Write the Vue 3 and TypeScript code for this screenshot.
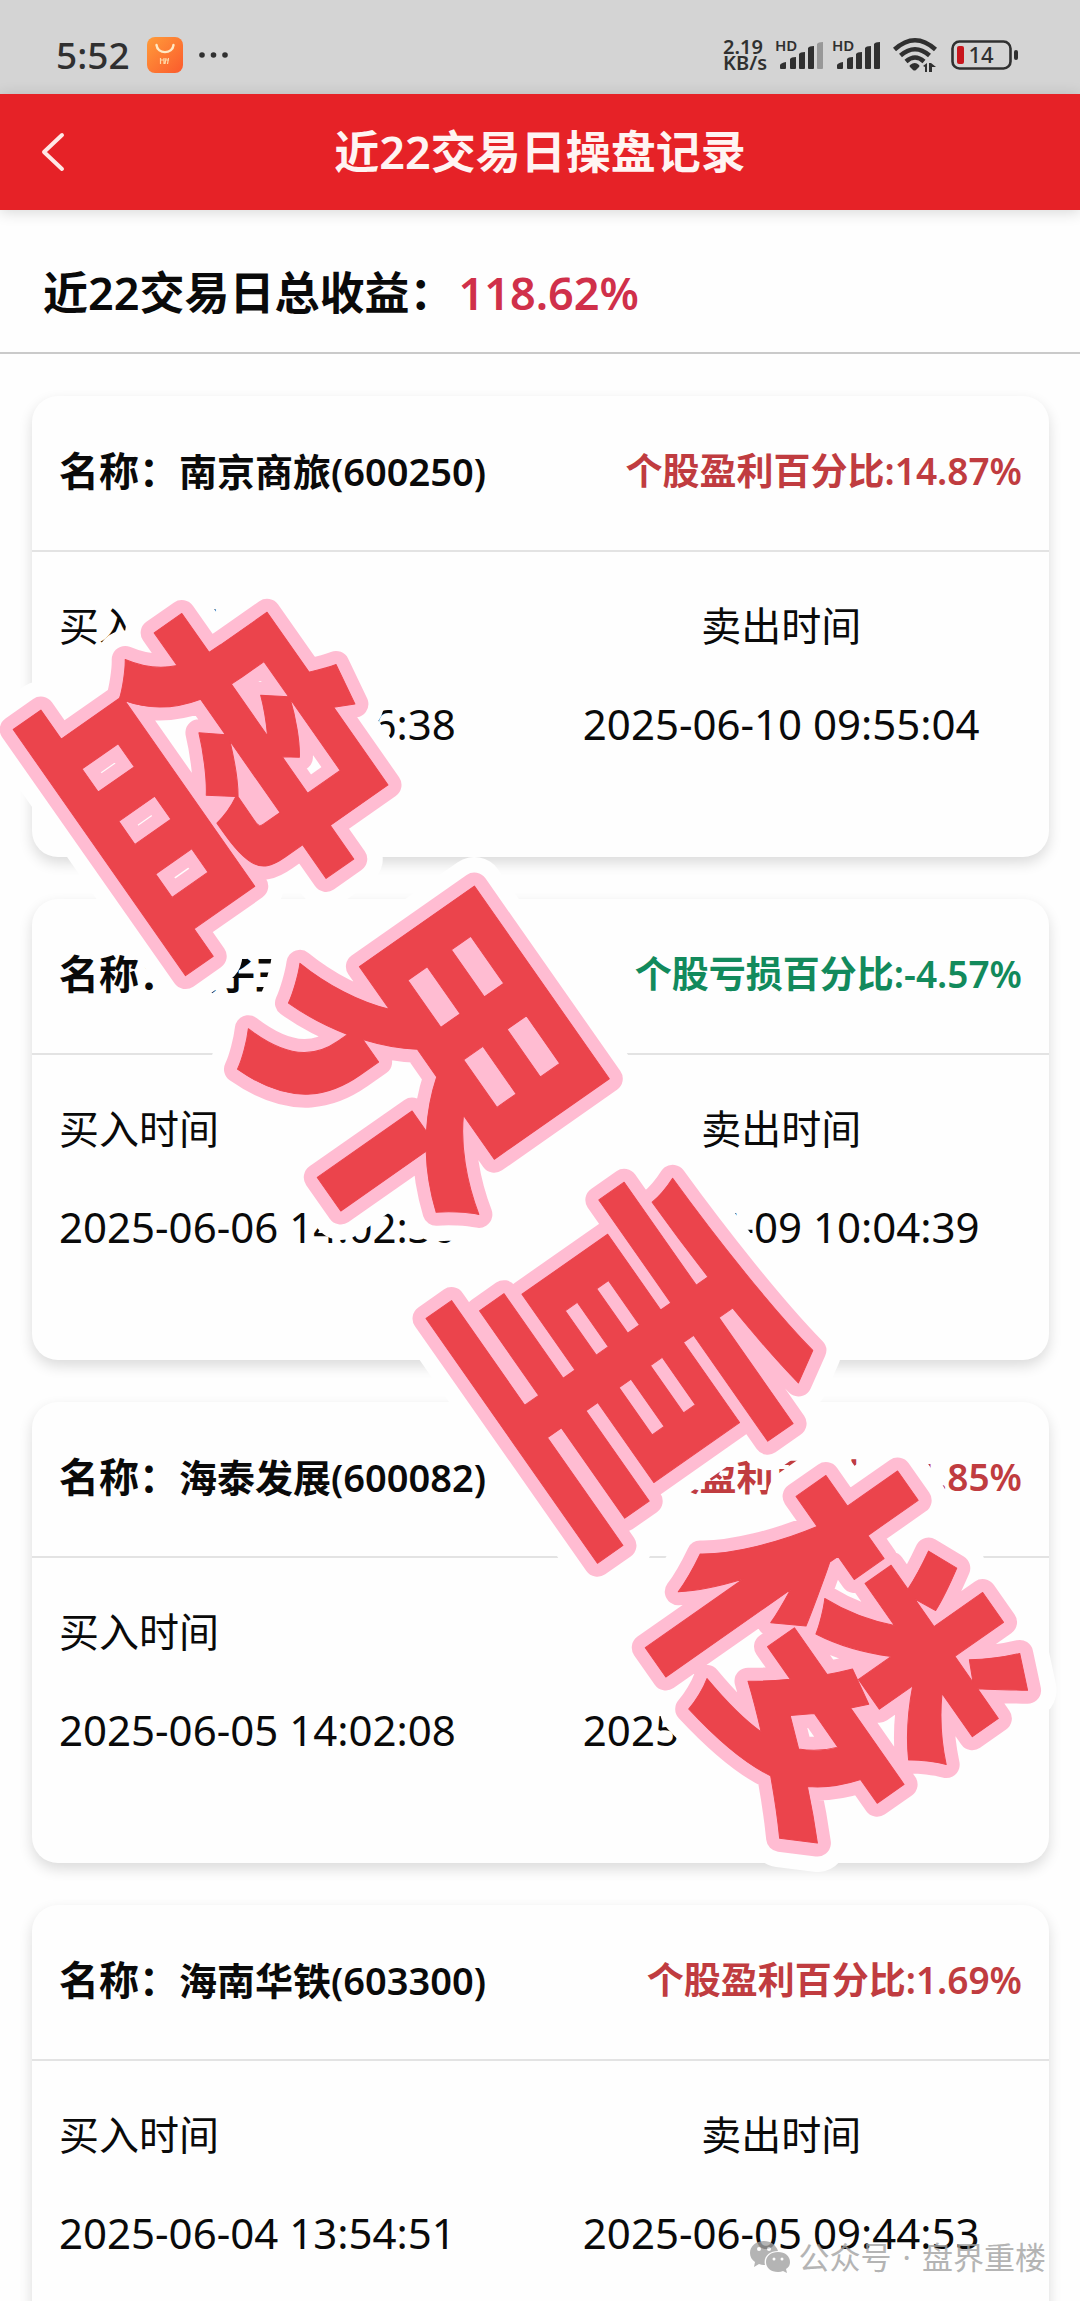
<script setup lang="ts">
interface Trade {
  name: string
  code: string
  profit: boolean
  percent: string
  buyTime: string
  sellTime: string
}

const total = '118.62%'

const trades: Trade[] = [
  { name: '南京商旅', code: '600250', profit: true, percent: '14.87%', buyTime: '2025-06-09 14:06:38', sellTime: '2025-06-10 09:55:04' },
  { name: '孩子王', code: '301078', profit: false, percent: '-4.57%', buyTime: '2025-06-06 14:02:36', sellTime: '2025-06-09 10:04:39' },
  { name: '海泰发展', code: '600082', profit: true, percent: '11.85%', buyTime: '2025-06-05 14:02:08', sellTime: '2025-06-06 09:46:20' },
  { name: '海南华铁', code: '603300', profit: true, percent: '1.69%', buyTime: '2025-06-04 13:54:51', sellTime: '2025-06-05 09:44:53' },
]

const stampLayers = ['halo', 'rim', 'face']
const signals = [{ weak: true }, { weak: false }]
</script>

<template>
  <div class="app">
    <div class="status">
      <span class="clock">5:52</span>
      <svg class="bag" width="36" height="36" viewBox="0 0 36 36" aria-hidden="true">
        <defs>
          <linearGradient id="bagFill" x1="0" y1="0" x2="1" y2="1">
            <stop offset="0" stop-color="#ff9c3a" />
            <stop offset="1" stop-color="#fb5a2c" />
          </linearGradient>
        </defs>
        <rect x="0" y="0" width="36" height="36" rx="8" fill="url(#bagFill)" />
        <path d="M9.500 8c1 9.500 16 9.500 17 0" fill="none" stroke="#ffe9c4" stroke-width="2.400" stroke-linecap="round" />
        <path d="M13.500 21v6M13.500 23h3M17 21v6M19 21l-1 6M19 23h3M21.500 21l-1 6" fill="none" stroke="#ffd9a8" stroke-width="1.200" />
      </svg>
      <svg class="dots" width="32" height="8" viewBox="0 0 32 8" aria-hidden="true">
        <circle cx="4" cy="4" r="2.800" /><circle cx="15.500" cy="4" r="2.800" /><circle cx="27" cy="4" r="2.800" />
      </svg>
      <span class="speed"><span>2.19</span><span>KB/s</span></span>
      <span v-for="(signal, i) in signals" :key="i" class="signal">
        <svg width="49" height="44" viewBox="0 -6 49 44" aria-hidden="true">
          <text x="0" y="12" class="hd">HD</text>
          <path d="M5 26q1-2 6-3v6q0 1-1 1H6q-1 0-1-1z" />
          <path d="M15 20q1-2 6-2v11q0 1-1 1h-4q-1 0-1-1z" />
          <path d="M24 15q1-2 6-2v16q0 1-1 1h-4q-1 0-1-1z" />
          <path d="M33 9q1-2 6-2v22q0 1-1 1h-4q-1 0-1-1z" />
          <path d="M42 5q1-2 6-2v26q0 1-1 1h-4q-1 0-1-1z" :class="{ faint: signal.weak }" />
        </svg>
      </span>
      <svg class="wifi" width="45" height="36" viewBox="0 0 45 36" aria-hidden="true">
        <g fill="none" stroke="#303030" stroke-width="4.500">
          <path d="M1.500 12.500Q22 -6 42.500 12.500" />
          <path d="M7.500 18.500Q22 6 36.500 18.500" />
          <path d="M13 24.500Q22 16.500 31 24.500" />
        </g>
        <path d="M17 28q5-4 9 0q1 1 0 2l-3 3q-1.500 1-3 0l-3-3q-1-1 0-2z" />
        <path d="M30 28l4-3v9h-2v-5zM36 34v-9h2l5 4h-4v5z" transform="translate(0 1)" />
      </svg>
      <svg class="battery" width="68" height="32" viewBox="0 0 68 32" aria-hidden="true">
        <rect x="1.500" y="2.500" width="58" height="27" rx="7" fill="none" stroke="#303030" stroke-width="2.600" />
        <rect x="6" y="7" width="7" height="18" rx="2" fill="#c8161d" />
        <rect x="63" y="11" width="4" height="10" rx="2" />
        <text x="30" y="24" class="level">14</text>
      </svg>
    </div>

    <header class="bar">
      <button class="back" type="button" aria-label="返回">
        <svg width="24" height="40" viewBox="0 0 24 40" aria-hidden="true">
          <path d="M21 3L3 20L21 37" fill="none" stroke="#ffe8e6" stroke-width="4" stroke-linecap="round" stroke-linejoin="round" />
        </svg>
      </button>
      <h1>近22交易日操盘记录</h1>
    </header>

    <section class="summary">近22交易日总收益：<strong>{{ total }}</strong></section>

    <main class="list">
      <article v-for="trade in trades" :key="trade.code" class="card">
        <div class="card-head">
          <h2><span class="key">名称：</span>{{ trade.name }}({{ trade.code }})</h2>
          <span class="rate" :class="trade.profit ? 'gain' : 'loss'">个股{{ trade.profit ? '盈利' : '亏损' }}百分比:{{ trade.percent }}</span>
        </div>
        <div class="card-body">
          <dl>
            <dt>买入时间</dt>
            <dd>{{ trade.buyTime }}</dd>
          </dl>
          <dl class="sell">
            <dt>卖出时间</dt>
            <dd>{{ trade.sellTime }}</dd>
          </dl>
        </div>
      </article>
    </main>

    <svg class="stamp" viewBox="0 0 1080 2301" aria-hidden="true">
      <g transform="translate(219 770) rotate(55)">
        <text v-for="layer in stampLayers" :key="layer" :class="layer" x="-165 194 553 911" y="125">盘界重楼</text>
      </g>
    </svg>

    <div class="account">
      <svg width="42" height="34" viewBox="0 0 42 34" aria-hidden="true">
        <path d="M15 1C7 1 1 6 1 13c0 4 2 7 5 9l-1 5 5-3q3 1 6 1c-2-8 4-14 13-14C27 5 22 1 15 1z" />
        <path d="M29 12c-7 0-12 4-12 10s5 10 12 10q3 0 5-1l4 2-1-4c3-2 4-4 4-7 0-6-5-10-12-10z" />
        <g fill="#fff"><circle cx="10" cy="9" r="2" /><circle cx="20" cy="9" r="2" /><circle cx="25" cy="19" r="1.500" /><circle cx="33" cy="19" r="1.500" /></g>
      </svg>
      <span>公众号<span class="sep"> · </span>盘界重楼</span>
    </div>
  </div>
</template>

<style>
body {
  margin: 0;
  background: #fefefe;
}
</style>

<style scoped>
.app {
  position: relative;
  height: 100vh;
  overflow: hidden;
  background: #fefefe;
  color: #0a0a0a;
  font-family: "Noto Sans", "Noto Sans CJK SC", sans-serif;
}

.status {
  display: flex;
  align-items: center;
  box-sizing: border-box;
  height: 94px;
  padding: 16px 61px 0 56px;
  background: #d4d4d4;
  color: #303030;
}
.status svg {
  display: block;
  fill: #303030;
}
.clock {
  font-size: 37px;
  line-height: 40px;
  font-weight: 500;
}
.bag {
  margin-left: 17px;
}
.dots {
  margin-left: 15px;
}
.speed {
  display: flex;
  flex-direction: column;
  margin-left: auto;
  font-size: 20px;
  line-height: 16px;
  font-weight: 600;
}
.signal {
  margin-left: 8px;
}
.hd {
  font-size: 15px;
  font-weight: 600;
}
.faint {
  fill: #989898;
}
.wifi {
  margin-left: 12px;
}
.battery {
  margin-left: 13px;
}
.level {
  font-size: 22px;
  font-weight: 500;
  text-anchor: middle;
}

.bar {
  display: grid;
  grid-template-columns: 1fr auto 1fr;
  align-items: center;
  height: 116px;
  background: #e62227;
  color: #fff4f2;
  box-shadow: 0 2px 14px rgba(0, 0, 0, 0.16);
}
.back {
  justify-self: start;
  margin: 0 0 0 33px;
  padding: 8px;
  border: 0;
  background: none;
}
.back svg {
  display: block;
}
h1 {
  margin: 0;
  font-size: 45px;
  line-height: 64px;
  font-weight: 600;
}

.summary {
  padding: 51px 43px 27px;
  border-bottom: 2px solid #cacaca;
  font-size: 45px;
  line-height: 64px;
  font-weight: 600;
}
.summary strong {
  margin-left: 4px;
  color: #d0304a;
  font-weight: 600;
}

.list {
  display: flex;
  flex-direction: column;
  gap: 42px;
  padding: 42px 31px 42px 32px;
}
.card {
  border-radius: 26px;
  background: #fefefe;
  box-shadow: 0 6px 14px rgba(0, 0, 0, 0.14);
}
.card-head {
  display: flex;
  align-items: center;
  justify-content: space-between;
  height: 150px;
  padding: 0 27px 4px;
  border-bottom: 2px solid #e3e3e3;
}
h2 {
  margin: 0;
  font-size: 38px;
  line-height: 56px;
  font-weight: 600;
}
.key {
  font-size: 40px;
}
.rate {
  font-size: 37px;
  line-height: 56px;
  font-weight: 600;
}
.gain {
  color: #c03c40;
}
.loss {
  color: #128a5c;
}
.card-body {
  display: grid;
  grid-template-columns: 1fr 1fr;
  padding: 25px 27px 84px;
}
dl {
  margin: 0;
}
.sell {
  text-align: center;
}
dt {
  font-size: 40px;
  line-height: 98px;
}
dd {
  margin: 0;
  font-size: 42px;
  line-height: 98px;
  white-space: nowrap;
}

.stamp {
  position: absolute;
  top: 0;
  left: 0;
  width: 100%;
  pointer-events: none;
}
.stamp text {
  font-family: "Noto Sans CJK SC", sans-serif;
  font-size: 328px;
  font-weight: 700;
  fill: #eb444c;
  stroke: #eb444c;
  stroke-width: 1px;
  stroke-linejoin: round;
}
.stamp .halo {
  stroke: #fefefe;
  stroke-width: 58px;
}
.stamp .rim {
  stroke: #ffbcd2;
  stroke-width: 27px;
}

.account {
  position: absolute;
  right: 34px;
  bottom: 22px;
  display: flex;
  align-items: center;
  gap: 8px;
  color: #a2a2a2;
  font-size: 31px;
  line-height: 44px;
  opacity: 0.8;
}
.account svg {
  display: block;
  fill: #a2a2a2;
}
.sep {
  padding: 0 3px;
}
</style>
